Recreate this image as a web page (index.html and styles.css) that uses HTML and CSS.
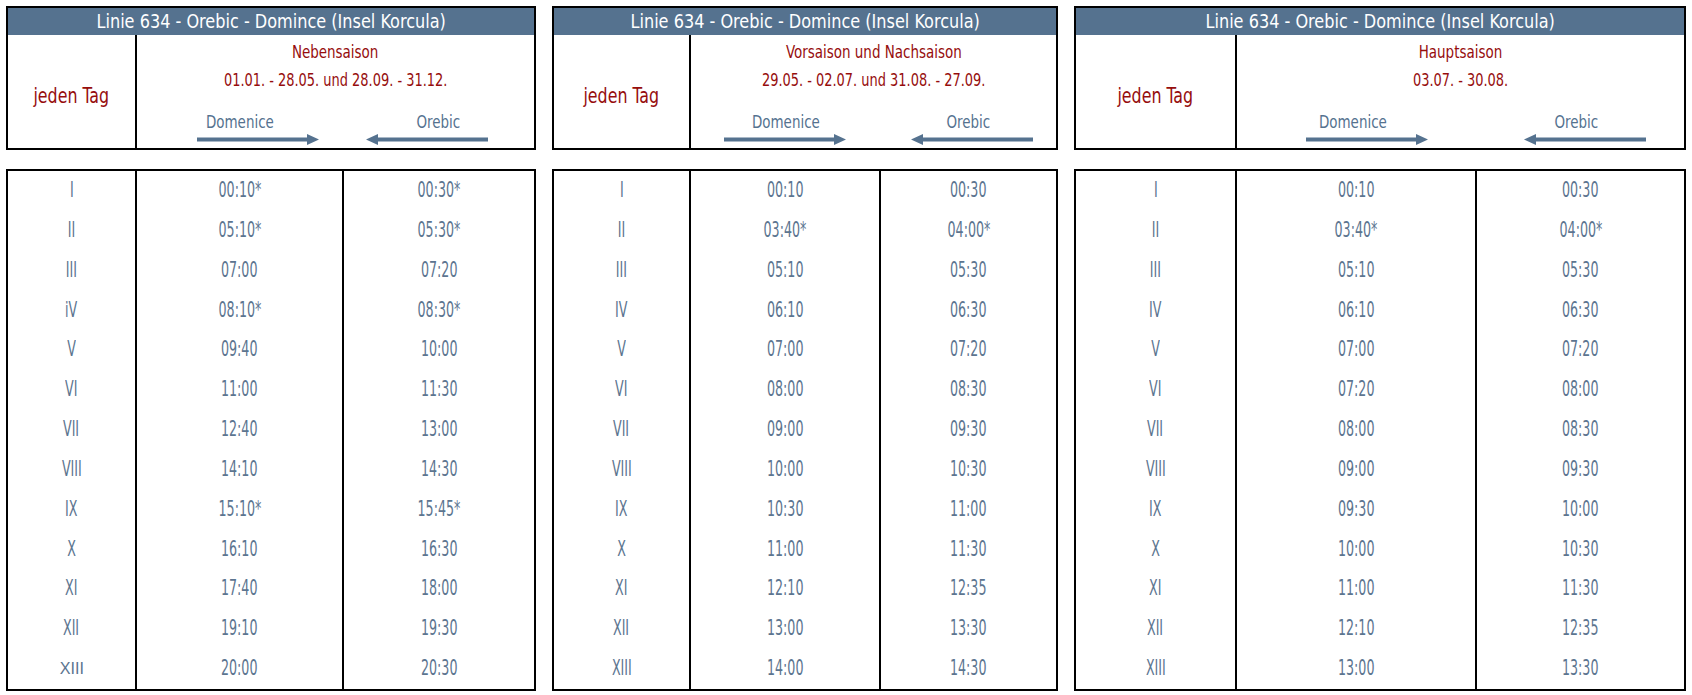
FILE: index.html
```html
<!DOCTYPE html>
<html lang="de">
<head>
<meta charset="utf-8">
<title>Linie 634 - Orebic - Domince</title>
<link rel="stylesheet" href="styles.css">
</head>
<body>
<div class="page">

  <section class="panel p1">
    <div class="head">
      <div class="bar"><span class="bar-text">Linie 634 - Orebic - Domince (Insel Korcula)</span></div>
      <div class="head-body">
        <div class="day"><span class="day-text">jeden Tag</span></div>
        <div class="season">
          <div class="s-title"><span class="t-text">Nebensaison</span></div>
          <div class="s-dates"><span class="d-text">01.01. - 28.05. und 28.09. - 31.12.</span></div>
          <div class="dirs">
            <div class="dir">
              <span class="dir-label">Domenice</span>
              <svg class="arrow arr-dom" viewBox="0 0 122 11" width="122" height="11"><rect x="0" y="3.5" width="111" height="4" /><polygon points="110,0 122,5.5 110,11" /></svg>
            </div>
            <div class="dir">
              <span class="dir-label">Orebic</span>
              <svg class="arrow arr-ore" viewBox="0 0 122 11" width="122" height="11"><rect x="11" y="3.5" width="111" height="4" /><polygon points="12,0 0,5.5 12,11" /></svg>
            </div>
          </div>
        </div>
      </div>
    </div>
    <div class="times">
      <div class="col c-num"><span>I</span><span>II</span><span>III</span><span>iV</span><span>V</span><span>VI</span><span>VII</span><span>VIII</span><span>IX</span><span>X</span><span>XI</span><span>XII</span><span class="alt">XIII</span></div>
      <div class="col"><span>00:10*</span><span>05:10*</span><span>07:00</span><span>08:10*</span><span>09:40</span><span>11:00</span><span>12:40</span><span>14:10</span><span>15:10*</span><span>16:10</span><span>17:40</span><span>19:10</span><span>20:00</span></div>
      <div class="col"><span>00:30*</span><span>05:30*</span><span>07:20</span><span>08:30*</span><span>10:00</span><span>11:30</span><span>13:00</span><span>14:30</span><span>15:45*</span><span>16:30</span><span>18:00</span><span>19:30</span><span>20:30</span></div>
    </div>
  </section>

  <section class="panel p2">
    <div class="head">
      <div class="bar"><span class="bar-text">Linie 634 - Orebic - Domince (Insel Korcula)</span></div>
      <div class="head-body">
        <div class="day"><span class="day-text">jeden Tag</span></div>
        <div class="season">
          <div class="s-title"><span class="t-text">Vorsaison und Nachsaison</span></div>
          <div class="s-dates"><span class="d-text">29.05. - 02.07. und 31.08. - 27.09.</span></div>
          <div class="dirs">
            <div class="dir">
              <span class="dir-label">Domenice</span>
              <svg class="arrow arr-dom" viewBox="0 0 122 11" width="122" height="11"><rect x="0" y="3.5" width="111" height="4" /><polygon points="110,0 122,5.5 110,11" /></svg>
            </div>
            <div class="dir">
              <span class="dir-label">Orebic</span>
              <svg class="arrow arr-ore" viewBox="0 0 122 11" width="122" height="11"><rect x="11" y="3.5" width="111" height="4" /><polygon points="12,0 0,5.5 12,11" /></svg>
            </div>
          </div>
        </div>
      </div>
    </div>
    <div class="times">
      <div class="col c-num"><span>I</span><span>II</span><span>III</span><span>IV</span><span>V</span><span>VI</span><span>VII</span><span>VIII</span><span>IX</span><span>X</span><span>XI</span><span>XII</span><span>XIII</span></div>
      <div class="col"><span>00:10</span><span>03:40*</span><span>05:10</span><span>06:10</span><span>07:00</span><span>08:00</span><span>09:00</span><span>10:00</span><span>10:30</span><span>11:00</span><span>12:10</span><span>13:00</span><span>14:00</span></div>
      <div class="col"><span>00:30</span><span>04:00*</span><span>05:30</span><span>06:30</span><span>07:20</span><span>08:30</span><span>09:30</span><span>10:30</span><span>11:00</span><span>11:30</span><span>12:35</span><span>13:30</span><span>14:30</span></div>
    </div>
  </section>

  <section class="panel p3">
    <div class="head">
      <div class="bar"><span class="bar-text">Linie 634 - Orebic - Domince (Insel Korcula)</span></div>
      <div class="head-body">
        <div class="day"><span class="day-text">jeden Tag</span></div>
        <div class="season">
          <div class="s-title"><span class="t-text">Hauptsaison</span></div>
          <div class="s-dates"><span class="d-text">03.07. - 30.08.</span></div>
          <div class="dirs">
            <div class="dir">
              <span class="dir-label">Domenice</span>
              <svg class="arrow arr-dom" viewBox="0 0 122 11" width="122" height="11"><rect x="0" y="3.5" width="111" height="4" /><polygon points="110,0 122,5.5 110,11" /></svg>
            </div>
            <div class="dir">
              <span class="dir-label">Orebic</span>
              <svg class="arrow arr-ore" viewBox="0 0 122 11" width="122" height="11"><rect x="11" y="3.5" width="111" height="4" /><polygon points="12,0 0,5.5 12,11" /></svg>
            </div>
          </div>
        </div>
      </div>
    </div>
    <div class="times">
      <div class="col c-num"><span>I</span><span>II</span><span>III</span><span>IV</span><span>V</span><span>VI</span><span>VII</span><span>VIII</span><span>IX</span><span>X</span><span>XI</span><span>XII</span><span>XIII</span></div>
      <div class="col"><span>00:10</span><span>03:40*</span><span>05:10</span><span>06:10</span><span>07:00</span><span>07:20</span><span>08:00</span><span>09:00</span><span>09:30</span><span>10:00</span><span>11:00</span><span>12:10</span><span>13:00</span></div>
      <div class="col"><span>00:30</span><span>04:00*</span><span>05:30</span><span>06:30</span><span>07:20</span><span>08:00</span><span>08:30</span><span>09:30</span><span>10:00</span><span>10:30</span><span>11:30</span><span>12:35</span><span>13:30</span></div>
    </div>
  </section>

</div>
</body>
</html>
```

FILE: styles.css
```css
* { box-sizing: border-box; }

html, body {
  margin: 0;
  padding: 0;
  background: #ffffff;
}

body {
  font-family: "DejaVu Sans Condensed", "DejaVu Sans", sans-serif;
  color: #5c7590;
}

.page {
  display: grid;
  grid-template-columns: 530px 506px 612px;
  column-gap: 16px;
  padding: 6px 0 0 6px;
}

.panel {
  display: flex;
  flex-direction: column;
  gap: 19px;
}

.p1 { --c1: 129px; --c2: 207px; }
.p2 { --c1: 137px; --c2: 190px; }
.p3 { --c1: 161px; --c2: 240px; }

/* condensed text: the reference face is very narrow */
.bar-text,
.day-text,
.t-text,
.d-text,
.dir-label,
.col span {
  display: inline-block;
  white-space: nowrap;
  transform-origin: center center;
}

/* ---------- header box ---------- */
.head {
  border: 2px solid #000;
  height: 144px;
  display: flex;
  flex-direction: column;
}

.bar {
  background: #55728f;
  color: #ffffff;
  height: 27px;
  line-height: 27px;
  text-align: center;
  font-size: 20px;
  white-space: nowrap;
  display: flex;
  justify-content: center;
}

.bar-text { transform: scaleX(0.895); }

.head-body {
  flex: 1;
  display: grid;
  grid-template-columns: calc(var(--c1) - 2px) 1fr;
}

.day {
  display: flex;
  align-items: center;
  justify-content: center;
  padding-top: 7px;
  color: #960d0d;
  font-size: 22px;
}

.day-text { transform: scaleX(0.8); }

.season {
  border-left: 2px solid #000;
  display: flex;
  flex-direction: column;
  align-items: stretch;
  padding-top: 3px;
  padding-bottom: 3px;
  color: #960d0d;
  text-align: center;
}

.s-title {
  font-size: 17px;
  line-height: 28px;
  display: flex;
  justify-content: center;
}

.t-text { transform: scaleX(0.88); }

.s-dates {
  font-size: 18px;
  line-height: 28px;
  display: flex;
  justify-content: center;
}

.d-text { transform: scaleX(0.8); }

.dirs {
  margin-top: auto;
  display: grid;
  grid-template-columns: 1fr 1fr;
}

.dir {
  display: flex;
  flex-direction: column;
  align-items: center;
  color: #55728f;
}

.dir-label {
  font-size: 18px;
  line-height: 22px;
  margin-left: 8px;
  transform: scaleX(0.83);
}

.arrow {
  display: block;
  fill: #55728f;
  margin-top: 1px;
}

.p1 .arr-dom { margin-left: 44px; }
.p1 .arr-ore { margin-right: 16px; }
.p2 .arr-dom { margin-left: 6px; }
.p2 .arr-ore { margin-left: 14px; }
.p3 .arr-dom { margin-left: 36px; }
.p3 .arr-ore { margin-left: 26px; }

/* ---------- times table ---------- */
.times {
  border: 2px solid #000;
  display: grid;
  grid-template-columns: calc(var(--c1) - 2px) var(--c2) 1fr;
}

.col {
  display: flex;
  flex-direction: column;
  align-items: center;
}

.col + .col {
  border-left: 2px solid #000;
}

.col span {
  height: 39.85px;
  line-height: 39.85px;
  font-size: 21px;
  color: #5c7590;
  transform: scaleX(0.67);
}

.col .alt {
  font-family: "Liberation Sans", "DejaVu Sans", sans-serif;
  font-size: 17px;
  transform: scaleX(0.95);
}
```
